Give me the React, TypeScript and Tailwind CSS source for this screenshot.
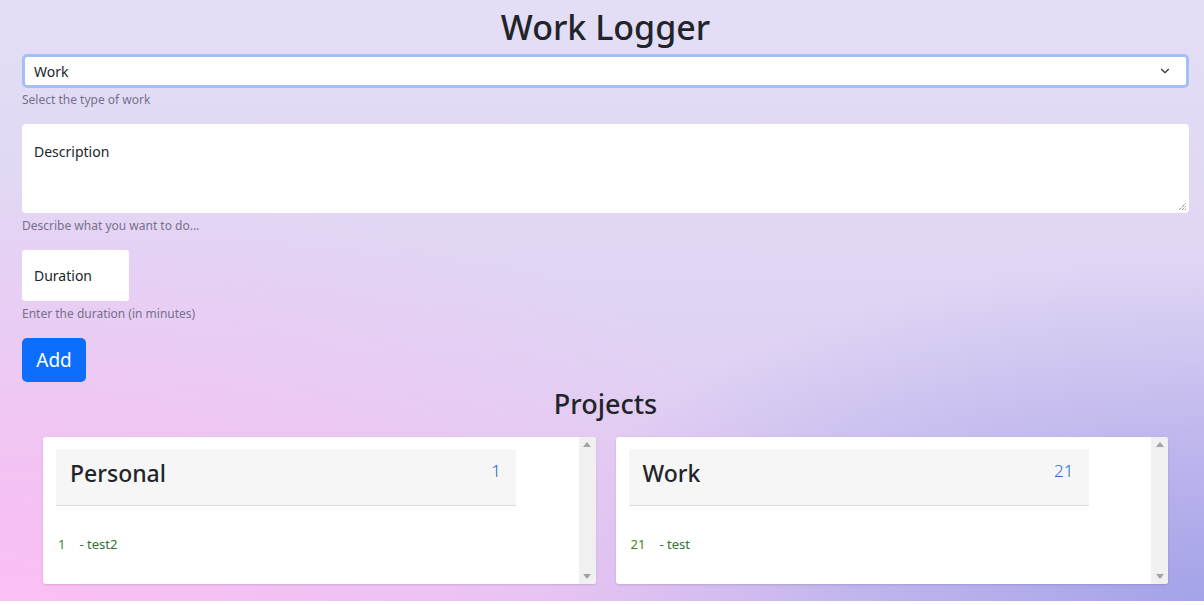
import { ChevronDown } from "lucide-react";

const font = { fontFamily: '"Noto Sans", "Open Sans", sans-serif' };

function ScrollTrack() {
  return (
    <div className="flex w-[17px] shrink-0 flex-col items-center justify-between bg-[#f0f0f0] py-[5px]">
      <svg width="8" height="5" viewBox="0 0 8 5">
        <path d="M0 5 L4 0 L8 5 Z" fill="#a3a3a3" />
      </svg>
      <svg width="8" height="5" viewBox="0 0 8 5">
        <path d="M0 0 L4 5 L8 0 Z" fill="#a3a3a3" />
      </svg>
    </div>
  );
}

function ProjectCard({ name, count, items }: { name: string; count: number; items: { id: number; text: string }[] }) {
  return (
    <div className="flex h-[147px] flex-1 rounded-[3px] bg-white shadow-sm overflow-hidden">
      <div className="flex-1 pl-[13px] pt-3">
        {/* Header */}
        <div className="flex h-[57px] w-[460px] items-center justify-between border-b border-[#dcdcdc] bg-[#f6f6f6] pl-[14px] pr-[15px]">
          <h2 className="-mt-[8px] text-[23px] font-medium text-[#212529]">{name}</h2>
          <span className="-mt-[12px] text-[17px] font-light text-[#2466cf]">{count}</span>
        </div>

        {/* Items */}
        <ul className="mt-[29px] ml-[2px] text-[13px] text-[#2e7332]">
          {items.map((it) => (
            <li key={it.id}>
              <span className="text-[#4d7f23]">{it.id}</span>
              <span className="ml-[14px]">- {it.text}</span>
            </li>
          ))}
        </ul>
      </div>
      <ScrollTrack />
    </div>
  );
}

export default function App() {
  return (
    <div style={font}>
      <div className="h-[601px] bg-[radial-gradient(ellipse_at_bottom_left,#fcbff3_0%,transparent_50%),radial-gradient(ellipse_at_bottom_right,#a3a3e9_0%,transparent_40%),linear-gradient(to_bottom,#e3def5,#dfd2f3_60%,#ddc6f1)] pl-[22px] pr-[15px] text-[#212529]">
        <h1 className="pt-[4px] text-center text-[34px] font-medium leading-[46px]">Work Logger</h1>

        {/* Type */}
        <div className="mt-[4px] flex h-[34px] items-center justify-between rounded-[5px] border-[3px] border-[#a3bff6] bg-white pl-[9px] pr-[14px]">
          <span className="text-[14px]">Work</span>
          <ChevronDown size={14} strokeWidth={2} className="text-[#343a40]" />
        </div>
        <p className="mt-[3px] text-[12px] text-[#77708c]">Select the type of work</p>

        {/* Description */}
        <div className="relative mt-[15px] h-[89px] rounded-[4px] bg-white px-3 pt-[15px]">
          <span className="text-[14px]">Description</span>
          <svg className="absolute bottom-[2px] right-[2px]" width="9" height="9" viewBox="0 0 9 9">
            <path d="M1 8 L8 1 M4 8 L8 4 M7 8 L8 7" stroke="#555" strokeWidth="1" strokeDasharray="1 1" />
          </svg>
        </div>
        <p className="mt-[4px] text-[12px] text-[#77708c]">Describe what you want to do...</p>

        {/* Duration */}
        <div className="mt-[15px] flex h-[51px] w-[107px] items-center rounded-[3px] bg-white px-3">
          <span className="text-[14px]">Duration</span>
        </div>
        <p className="mt-[4px] text-[12px] text-[#77708c]">Enter the duration (in minutes)</p>

        <button className="mt-[15px] h-[44px] w-[64px] rounded-[5px] bg-[#0d6efd] text-[19px] text-white">Add</button>

        <h3 className="mt-[2px] text-center text-[27px] font-medium leading-[40px]">Projects</h3>

        <div className="mt-[13px] flex gap-5 px-[21px]">
          <ProjectCard name="Personal" count={1} items={[{ id: 1, text: "test2" }]} />
          <ProjectCard name="Work" count={21} items={[{ id: 21, text: "test" }]} />
        </div>
      </div>
    </div>
  );
}
